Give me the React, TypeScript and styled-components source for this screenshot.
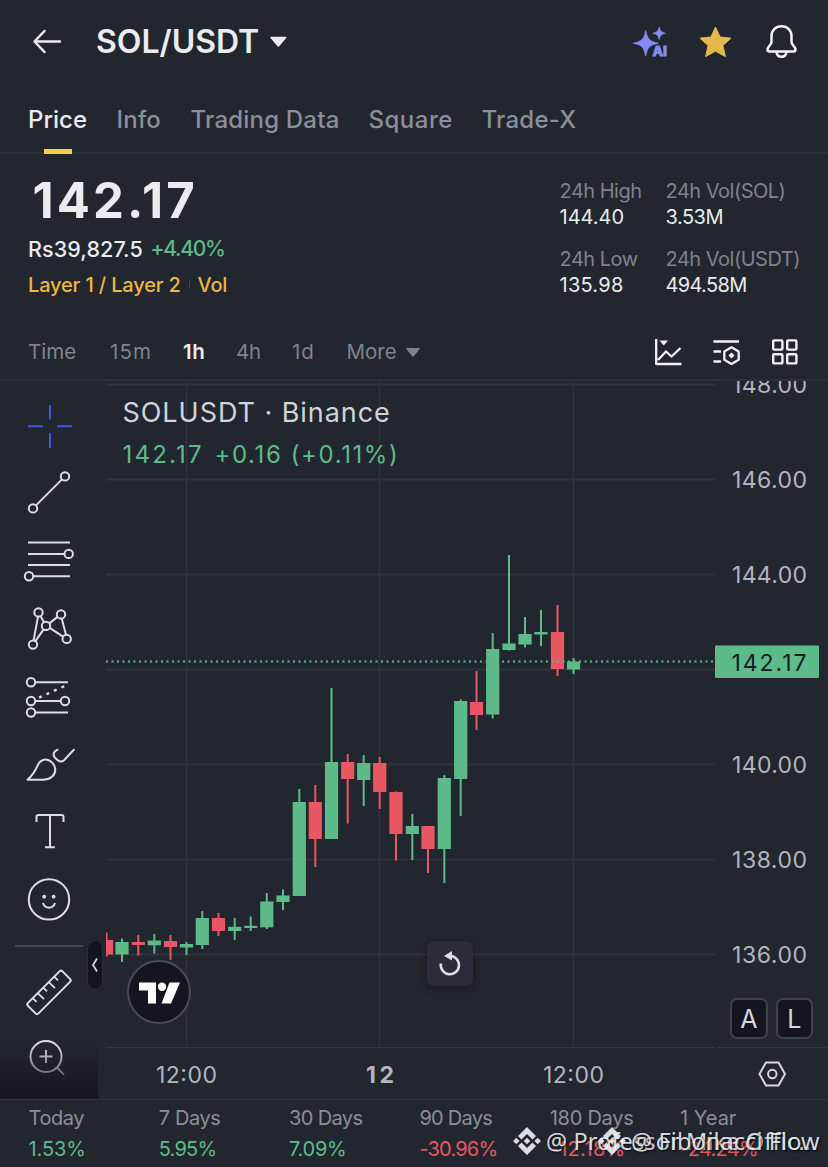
import React from "react";
import styled, { createGlobalStyle, css } from "styled-components";

const color = {
  bg: "#22262f",
  line: "#2d3039",
  text: "#eaecef",
  muted: "#8b8f99",
  dim: "#7f838e",
  green: "#5dbb8a",
  red: "#e85762",
  gold: "#ecb741",
  chartText: "#b2b5be",
  panel: "#131520",
};

const Global = createGlobalStyle`
  * { box-sizing: border-box; }
  body { margin: 0; background: ${color.bg}; }
`;

const Screen = styled.main`
  width: 828px;
  height: 1167px;
  position: relative;
  overflow: hidden;
  display: flex;
  flex-direction: column;
  background: ${color.bg};
  color: ${color.text};
  font-family: Inter, "Liberation Sans", sans-serif;
  white-space: nowrap;
  & > * {
    flex: none;
  }
`;

/* ---------- header ---------- */
const Header = styled.header`
  height: 84px;
  display: flex;
  align-items: center;
  padding: 0 30.5px 0 32px;
`;
const Pair = styled.h1`
  margin: 0 11.5px 0 34px;
  width: 162px;
  font-size: 32px;
  line-height: 40px;
  font-weight: 600;
  letter-spacing: 0;
`;
const HeaderActions = styled.div`
  margin-left: auto;
  display: flex;
  align-items: center;
  gap: 31.5px;
`;

const Tabs = styled.nav`
  height: 70px;
  display: flex;
  padding-left: 28px;
  border-bottom: 2px solid ${color.line};
`;
const Tab = styled.a<{ $w: number; $active?: boolean; $ls?: number }>`
  width: ${(p) => p.$w}px;
  font-size: 24px;
  line-height: 71px;
  font-weight: 500;
  letter-spacing: ${(p) => p.$ls ?? 0}px;
  color: ${(p) => (p.$active ? color.text : color.muted)};
  position: relative;
  ${(p) =>
    p.$active &&
    css`
      &::after {
        content: "";
        position: absolute;
        left: 16px;
        bottom: -2px;
        width: 28px;
        height: 5px;
        background: #f7cd4d;
      }
    `}
`;

/* ---------- price summary ---------- */
const Summary = styled.section`
  height: 172px;
  display: flex;
  justify-content: space-between;
  padding: 20px 27.5px 0 28px;
`;
const PriceBlock = styled.div`
  display: flex;
  flex-direction: column;
`;
const Price = styled.div`
  height: 54px;
  padding-left: 4.5px;
  font-size: 49px;
  line-height: 54px;
  font-weight: 700;
  letter-spacing: 3.1px;
`;
const Fiat = styled.div`
  height: 40px;
  display: flex;
  font-size: 21.5px;
  line-height: 42px;
  font-weight: 500;
`;
const FiatValue = styled.span`
  width: 122.5px;
  letter-spacing: 0.1px;
`;
const Change = styled.span`
  color: ${color.green};
  font-size: 21px;
  letter-spacing: -1.25px;
`;
const Tags = styled.div`
  display: flex;
  align-items: center;
  height: 34px;
  font-size: 20px;
  font-weight: 500;
  color: ${color.gold};
`;
const TagName = styled.span<{ $w?: number; $ls: number }>`
  width: ${(p) => (p.$w ? `${p.$w}px` : "auto")};
  letter-spacing: ${(p) => p.$ls}px;
`;
const TagRule = styled.i`
  width: 1px;
  height: 8px;
  margin-right: 8px;
  background: #434750;
`;
const Stats = styled.dl`
  margin: 4px 0 0;
  width: 241px;
  display: grid;
  grid-template-columns: 106px 1fr;
  grid-auto-rows: 68px;
`;
const Stat = styled.div`
  display: flex;
  flex-direction: column;
`;
const StatLabel = styled.dt`
  font-size: 20px;
  line-height: 26px;
  color: ${color.dim};
  letter-spacing: -0.5px;
`;
const StatValue = styled.dd<{ $ls?: number }>`
  margin: 0;
  font-size: 20px;
  line-height: 27px;
  letter-spacing: ${(p) => p.$ls ?? 0}px;
`;

/* ---------- intervals ---------- */
const Intervals = styled.div`
  height: 55px;
  display: flex;
  align-items: center;
  padding: 0 30px 1px 28px;
  border-bottom: 2px solid ${color.line};
`;
const Interval = styled.span<{ $w: number; $active?: boolean; $ls?: number }>`
  width: ${(p) => p.$w}px;
  font-size: 20.5px;
  line-height: 30px;
  letter-spacing: ${(p) => p.$ls ?? 0}px;
  font-weight: ${(p) => (p.$active ? 600 : 400)};
  color: ${(p) => (p.$active ? color.text : color.dim)};
`;
const IntervalTools = styled.div`
  margin-left: auto;
  display: flex;
  align-items: center;
  gap: 31px;
`;

/* ---------- chart ---------- */
const Workspace = styled.section`
  height: 719px;
  display: flex;
  position: relative;
  border-bottom: 1px solid #343741;
`;
const Toolbar = styled.aside`
  width: 98px;
  padding-top: 10.5px;
  display: flex;
  flex-direction: column;
  position: relative;
  overflow: hidden;
  &::after {
    content: "";
    position: absolute;
    left: 0;
    right: 0;
    bottom: 0;
    height: 56px;
    background: linear-gradient(rgba(20, 22, 32, 0), rgba(20, 22, 32, 0.45) 45%, #141620);
  }
`;
const ToolSlot = styled.svg`
  display: block;
  flex: none;
  width: 98px;
  height: 67.75px;
  overflow: visible;
  fill: none;
  stroke: #dcdee3;
  stroke-width: 2;
`;
const ToolRule = styled.hr`
  width: 68px;
  height: 2px;
  flex: none;
  margin: 11px 0 12px 15px;
  border: 0;
  background: #444751;
`;
const Pane = styled.div`
  width: 730px;
  position: relative;
`;
const Plot = styled.svg`
  display: block;
  font-family: Inter, "Liberation Sans", sans-serif;
`;
const Legend = styled.div`
  position: absolute;
  left: 24.5px;
  top: 14px;
`;
const LegendTitle = styled.div`
  font-size: 27px;
  line-height: 36px;
  color: #d1d4dc;
  letter-spacing: 0.95px;
`;
const LegendValues = styled.div`
  display: flex;
  font-size: 24px;
  line-height: 36px;
  margin-top: 6px;
  color: ${color.green};
  span:first-child {
    width: 92px;
    letter-spacing: 2.2px;
  }
  span:last-child {
    letter-spacing: 1.6px;
  }
`;
const Collapse = styled.button`
  position: absolute;
  left: 87px;
  top: 559px;
  width: 16px;
  height: 50px;
  padding: 0;
  border: 1px solid #2d303b;
  border-radius: 8px;
  background: ${color.panel};
  display: grid;
  place-items: center;
`;
const Brand = styled.div`
  position: absolute;
  left: 29px;
  top: 579px;
  width: 64px;
  height: 64px;
  border-radius: 50%;
  border: 2px solid #494c57;
  background: ${color.panel};
`;
const Reset = styled.button`
  position: absolute;
  left: 329px;
  top: 560px;
  width: 46px;
  height: 45px;
  padding: 0;
  border: 0;
  border-radius: 7px;
  background: #2a2d39;
  box-shadow: 0 2px 6px rgba(10, 12, 20, 0.5);
`;
const ScaleButtons = styled.div`
  position: absolute;
  left: 632px;
  top: 617px;
  display: flex;
  gap: 8px;
`;
const ScaleButton = styled.button`
  width: 37.5px;
  height: 41px;
  padding: 0;
  border: 2px solid #3e414c;
  border-radius: 7px;
  background: ${color.panel};
  color: #d5d7dd;
  font: 400 25px/38px Inter, "Liberation Sans", sans-serif;
`;

/* ---------- performance ---------- */
const Performance = styled.footer`
  height: 67px;
  padding: 4px 0 0 28.5px;
  display: grid;
  grid-template-columns: repeat(6, 130.3px);
  position: relative;
`;
const Period = styled.div`
  display: flex;
  flex-direction: column;
  font-size: 20px;
`;
const PeriodName = styled.span<{ $ls: number }>`
  line-height: 28px;
  color: ${color.muted};
  letter-spacing: ${(p) => p.$ls}px;
`;
const PeriodValue = styled.span<{ $down?: boolean; $ls: number }>`
  line-height: 34px;
  color: ${(p) => (p.$down ? color.red : color.green)};
  letter-spacing: ${(p) => p.$ls}px;
`;
const Credit = styled.div<{ $left: number }>`
  position: absolute;
  left: ${(p) => p.$left}px;
  top: 25px;
  display: flex;
  align-items: center;
  gap: 5px;
  font: 400 23.5px/32px "Noto Sans", sans-serif;
  letter-spacing: 0.1px;
  color: rgba(240, 241, 244, 0.9);
  text-shadow: 1px 1px 2px rgba(0, 0, 0, 0.7);
`;

type Candle = [number, number, number, number, number, 0 | 1];
/* x centre, body top, body bottom, wick top, wick bottom, rising */
const candles: Candle[] = [
  [106.5, 940, 954.5, 932.5, 956.5, 0],
  [122, 942, 954.5, 938.5, 962, 1],
  [138.3, 942, 945, 935, 955.5, 0],
  [154.3, 940.5, 945.3, 934, 953.5, 1],
  [170.5, 941, 947, 935, 960, 0],
  [186.5, 944, 947.5, 942, 955, 1],
  [202.3, 918, 945, 911, 949, 1],
  [218.5, 918, 931, 913, 936, 0],
  [234.7, 926.8, 931, 918, 940, 1],
  [250.7, 925.8, 928, 916.5, 931, 1],
  [266.8, 901.5, 927.3, 893, 929, 1],
  [283, 895.5, 902, 889.5, 910, 1],
  [299.3, 802, 896, 789, 896, 1],
  [315.3, 802, 839, 785, 867, 0],
  [331.5, 762, 839, 688, 839, 1],
  [347.7, 762, 779, 754, 823.5, 0],
  [363.7, 763, 780, 755, 806, 1],
  [379.7, 763, 792, 757, 809, 0],
  [396, 792, 834, 791.5, 860.5, 0],
  [412.3, 826, 834, 814, 860, 1],
  [428, 826, 849, 826, 873, 0],
  [444.3, 778, 849, 775, 883, 1],
  [460.7, 701, 779, 699.5, 816, 1],
  [476.5, 702, 715, 671, 730, 0],
  [492.7, 649, 714.5, 633, 718.5, 1],
  [509, 643.5, 650, 555, 650.5, 1],
  [525, 634, 644.5, 617, 647.5, 1],
  [541, 632, 634.5, 610, 646, 1],
  [557.5, 632, 669, 605, 676, 0],
  [573.5, 661.5, 669.5, 658, 674, 1],
];
const priceLines = [
  [384, "148.00"],
  [479, "146.00"],
  [574, "144.00"],
  [669, "142.00"],
  [764, "140.00"],
  [859, "138.00"],
  [954, "136.00"],
] as const;

function Chart() {
  return (
    <Plot width="730" height="718" viewBox="98 381 730 718">
      <defs>
        <clipPath id="plot-area">
          <rect x="106" y="381" width="609" height="666" />
        </clipPath>
      </defs>
      <g stroke="#30333d" strokeWidth="2">
        {priceLines.map(([y]) => (
          <path key={y} d={`M106 ${y}.4H715`} />
        ))}
        {[186.5, 379.5, 573.5].map((x) => (
          <path key={x} d={`M${x} 381V1046`} strokeWidth="1.5" />
        ))}
        <path d="M106 1047.5H714M717 1047.5H828" strokeWidth="1" stroke="#343741" />
      </g>
      <g clipPath="url(#plot-area)">
        {candles.map(([x, t, b, wt, wb, up]) => (
          <g key={x} fill={up ? color.green : color.red}>
            <rect x={x - 1} y={wt} width="2" height={wb - wt} />
            <rect x={x - 6.6} y={t} width="13.2" height={b - t} />
          </g>
        ))}
        <path d="M106 661.5H715" stroke={color.green} strokeWidth="1.9" strokeDasharray="2 3.5" />
      </g>
      <g fill={color.chartText} fontSize="23">
        {priceLines.map(([y, t]) => (
          <text key={t} x="732" y={y + 9.2} textLength="75">
            {t}
          </text>
        ))}
        <text x="156" y="1083" textLength="61">12:00</text>
        <text x="366" y="1083" textLength="28" fontWeight="700">12</text>
        <text x="543" y="1083" textLength="61">12:00</text>
      </g>
      <rect x="715" y="645.5" width="104" height="32.5" rx="1" fill={color.green} />
      <text x="731.5" y="670.5" textLength="75" fontSize="23" fill="#171b24">142.17</text>
      <g fill="none" stroke="#d5d7dd" strokeWidth="2">
        <path d="M759.5 1074 766 1062.5H778.5L785 1074 778.5 1085.5H766Z" />
        <circle cx="772.3" cy="1074" r="4.2" />
      </g>
    </Plot>
  );
}

const Tool = ({ cy, children }: { cy: number; children: React.ReactNode }) => (
  <ToolSlot viewBox={`0 ${cy - 33.9} 98 67.75`}>{children}</ToolSlot>
);

function DrawingTools() {
  return (
    <Toolbar>
      <Tool cy={426}>
        <path stroke="#3d58e0" d="M50 405V419.5M50 433V448M28 426.4H43M57 426.4H72" />
      </Tool>
      <Tool cy={493.5}>
        <circle cx="33" cy="509" r="4.2" />
        <circle cx="65" cy="477" r="4.2" />
        <path d="M36 506 62 480" />
      </Tool>
      <Tool cy={561.3}>
        <path d="M28 543H70M28 554.3H64.5M28 565.5H70M33 576.7H70" />
        <circle cx="68.7" cy="554.3" r="4.2" />
        <circle cx="29" cy="576.7" r="4.2" />
      </Tool>
      <Tool cy={629}>
        <circle cx="38.5" cy="612.5" r="4.2" />
        <circle cx="61" cy="614.5" r="4.2" />
        <circle cx="46" cy="626" r="4.2" />
        <circle cx="33" cy="644.7" r="4.2" />
        <circle cx="66.7" cy="639" r="4.2" />
        <path d="M38 616.7 33.6 640.5M40.5 616.2 44 622.3M43.6 629.5 35.4 641.2M49.4 623.5 57.5 617M49.7 628 63 636.7M61.7 618.7 66 634.8" />
      </Tool>
      <Tool cy={696.9}>
        <circle cx="31" cy="682.3" r="4.2" />
        <circle cx="31" cy="701" r="4.2" />
        <circle cx="65" cy="701" r="4.2" />
        <circle cx="31" cy="712.5" r="4.2" />
        <path d="M35 682.3H68M35 701H61M35 712.5H68" />
        <path d="M39 697.6 67 685" strokeDasharray="3 5.2" strokeWidth="2.4" />
      </Tool>
      <Tool cy={764.7}>
        <path
          strokeLinejoin="round"
          d="M27.5 780.5C34 775 36 770 38 765.5C41 760 46 759 50.5 762C56 766 57 773 52 777.5C49 780 46 780.5 43 780.5Z"
        />
        <path strokeLinecap="round" d="M57.5 750.5C53 752.5 52.5 756.5 55.5 759L58 761.2C60 762.8 62 762.8 64 761L73.8 750.5" />
      </Tool>
      <Tool cy={832.4}>
        <path strokeLinejoin="round" d="M36.5 822.5V817.5Q36.5 815.6 38.5 815.6H61.5Q63.5 815.6 63.5 817.5V822.5M50 815.6V847.8M45 847.8H54.8" />
      </Tool>
      <Tool cy={900.2}>
        <circle cx="49" cy="899.7" r="20.2" />
        <g fill="#dcdee3" stroke="none">
          <circle cx="44.2" cy="897" r="1.9" />
          <circle cx="53.6" cy="897" r="1.9" />
        </g>
        <path d="M43 903.3C45 909.5 53 909.5 55 903.3" />
      </Tool>
      <ToolRule />
      <Tool cy={992.5}>
        <path
          strokeLinejoin="round"
          d="M28 1002.5 59.5 971Q61 969.5 62.5 971L70 978.5Q71.5 980 70 981.5L38.5 1013Q37 1014.5 35.5 1013L28 1005.5Q26.5 1004 28 1002.5Z"
        />
        <path strokeWidth="1.8" d="M33 998 36.5 1001.5M38 993 44 998.8M43.5 987.5 47 991M49 982 55 987.8M54.5 976.5 58 980" />
      </Tool>
      <Tool cy={1060.3}>
        <circle cx="46" cy="1057" r="15.5" />
        <path d="M46 1050.5V1063.5M39.5 1057H52.5M57 1068 64 1075" />
      </Tool>
    </Toolbar>
  );
}

const Mark = () => (
  <svg width="28" height="28" viewBox="0 0 28 28" fill="rgba(235,236,240,.92)">
    <path d="M14 0 23 9 19.5 12.5 14 7 8.5 12.5 5 9ZM14 28 23 19 19.5 15.5 14 21 8.5 15.5 5 19ZM14 10.7 17.3 14 14 17.3 10.7 14ZM3.3 10.7 6.6 14 3.3 17.3 0 14ZM24.7 10.7 28 14 24.7 17.3 21.4 14Z" />
  </svg>
);

export default function App() {
  return (
    <Screen>
      <Global />
      <Header>
        <svg width="30" height="26" viewBox="0 0 30 26" fill="none" stroke={color.text} strokeWidth="2.5" strokeLinecap="round" strokeLinejoin="round">
          <path d="M12.5 2 2.5 12.5 12.5 23M3 12.5H28" />
        </svg>
        <Pair>SOL/USDT</Pair>
        <svg width="17" height="12" viewBox="0 0 17 12" fill={color.text}>
          <path d="M1.2 .8H15.5Q17 .8 16 2.2L9.5 10Q8.4 11.4 7.3 10L.7 2.2Q-.3 .8 1.2 .8Z" />
        </svg>
        <HeaderActions>
          <svg width="34" height="34" viewBox="0 0 34 34" fill="#858bf3" overflow="visible">
            <path d="M12.7 5.500C14.6 14.3 16.4 16.3 25.3 18.2C16.4 20.1 14.6 22.1 12.7 31C10.8 22.1 9 20.1 .3 18.2C9 16.3 10.8 14.3 12.7 5.500Z" stroke="#858bf3" strokeWidth=".8" strokeLinejoin="round" />
            <path d="M26.2 1.8C27.2 6 28.4 7.2 32.6 8.2C28.4 9.2 27.2 10.4 26.2 14.6C25.2 10.4 24 9.2 19.8 8.2C24 7.2 25.2 6 26.2 1.8Z" stroke="#858bf3" strokeWidth=".6" strokeLinejoin="round" />
            <path d="M22.5 19.800H34V32H17.5Z" fill={color.bg} />
            <text x="19.5" y="30.5" fontSize="12.5" fontWeight="800" textLength="14.5" lengthAdjust="spacingAndGlyphs" stroke="#858bf3" strokeWidth=".8">AI</text>
          </svg>
          <svg width="34" height="34" viewBox="0 0 34 34" fill="#e3b94c">
            <path d="M17.5 2 22.1 12 33 13.2 24.9 20.6 27.4 31.6 17.5 26.2 7.6 31.6 10.1 20.6 2 13.2 12.9 12Z" stroke="#e3b94c" strokeLinejoin="round" />
          </svg>
          <svg width="34" height="34" viewBox="0 0 34 34" fill="none" stroke="#f4f5f7" strokeWidth="2.5" strokeLinejoin="round">
            <path d="M17.5 1.3C11.5 1.3 7.5 5.5 7.5 11V17C7.5 19.5 3.5 22 3.5 24.5C3.5 25.8 4.3 26.5 5.5 26.5H29.5C30.7 26.5 31.5 25.8 31.5 24.5C31.5 22 27.5 19.5 27.5 17V11C27.5 5.5 23.5 1.3 17.5 1.3Z" />
            <path d="M12.5 27.3C13 30.3 15 31.8 17.5 31.8S22 30.3 22.5 27.3" />
          </svg>
        </HeaderActions>
      </Header>

      <Tabs>
        <Tab $w={88.5} $active>Price</Tab>
        <Tab $w={74} $ls={0.1}>Info</Tab>
        <Tab $w={178} $ls={0.2}>Trading Data</Tab>
        <Tab $w={113} $ls={0.5}>Square</Tab>
        <Tab $w={100} $ls={0.25}>Trade-X</Tab>
      </Tabs>

      <Summary>
        <PriceBlock>
          <Price>142.17</Price>
          <Fiat>
            <FiatValue>Rs39,827.5</FiatValue>
            <Change>+4.40%</Change>
          </Fiat>
          <Tags>
            <TagName $w={160.5} $ls={-0.15}>Layer 1 / Layer 2</TagName>
            <TagRule />
            <TagName $ls={-0.2}>Vol</TagName>
          </Tags>
        </PriceBlock>
        <Stats>
          <Stat>
            <StatLabel>24h High</StatLabel>
            <StatValue>144.40</StatValue>
          </Stat>
          <Stat>
            <StatLabel>24h Vol(SOL)</StatLabel>
            <StatValue $ls={-0.5}>3.53M</StatValue>
          </Stat>
          <Stat>
            <StatLabel>24h Low</StatLabel>
            <StatValue $ls={0.25}>135.98</StatValue>
          </Stat>
          <Stat>
            <StatLabel>24h Vol(USDT)</StatLabel>
            <StatValue $ls={-0.65}>494.58M</StatValue>
          </Stat>
        </Stats>
      </Summary>

      <Intervals>
        <Interval $w={82}>Time</Interval>
        <Interval $w={73} $ls={1.1}>15m</Interval>
        <Interval $w={53} $ls={0.5} $active>1h</Interval>
        <Interval $w={56} $ls={-0.3}>4h</Interval>
        <Interval $w={54.5} $ls={0.8}>1d</Interval>
        <Interval $w={59.5}>More</Interval>
        <svg width="14" height="9" viewBox="0 0 14 9" fill={color.dim}>
          <path d="M1 0H13Q14.5 0 13.5 1.3L8 8Q7 9.3 6 8L.5 1.3Q-.5 0 1 0Z" />
        </svg>
        <IntervalTools>
          <svg width="28" height="28" viewBox="0 0 28 28" fill="none" stroke="#f0f1f4" strokeWidth="2.3">
            <path d="M2.2 1V26H27.5M4 22 12 13.5 17.5 18.5 26.5 10" strokeLinejoin="round" />
            <path d="M5.5 2.5H14L9.8 7.5Z" fill="#f0f1f4" stroke="none" />
          </svg>
          <svg width="28" height="28" viewBox="0 0 28 28" fill="none" stroke="#f0f1f4" strokeWidth="2.3">
            <path d="M.5 3.5H26M.5 13.5H8M.5 23.5H8" />
            <path d="M18.5 9.3 25.7 13.4V21.8L18.5 25.9 11.3 21.8V13.4Z" strokeLinejoin="round" />
            <path d="M18.5 14.6 21.5 17.6 18.5 20.6 15.5 17.6Z" fill="#f0f1f4" stroke="none" />
          </svg>
          <svg width="26" height="26" viewBox="0 0 26 26" fill="none" stroke="#f0f1f4" strokeWidth="2.4">
            <rect x="1.2" y="1.4" width="9.2" height="9.2" rx="1" />
            <rect x="15.2" y="1.4" width="9.2" height="9.2" rx="1" />
            <rect x="1.2" y="15.2" width="9.2" height="9.2" rx="1" />
            <rect x="15.2" y="15.2" width="9.2" height="9.2" rx="1" />
          </svg>
        </IntervalTools>
      </Intervals>

      <Workspace>
        <DrawingTools />
        <Pane>
          <Chart />
          <Legend>
            <LegendTitle>SOLUSDT · Binance</LegendTitle>
            <LegendValues>
              <span>142.17</span>
              <span>+0.16 (+0.11%)</span>
            </LegendValues>
          </Legend>
          <Brand>
            <svg width="60" height="60" viewBox="129 962 60 60" fill="#fff">
              <path d="M139 982.5H156V1003.5H148V990.5H139ZM169.5 982.5H180L171 1003.5H161.5Z" />
              <circle cx="162" cy="986.7" r="4.2" />
            </svg>
          </Brand>
          <Reset>
            <svg width="46" height="45" viewBox="427 942 46 45" fill="none" stroke="#dcdee3" strokeWidth="2.6">
              <path d="M440.9 964.5A9.1 9.1 0 1 0 450.5 957" />
              <path d="M444 957 452 952V961.5Z" fill="#dcdee3" stroke="none" />
            </svg>
          </Reset>
          <ScaleButtons>
            <ScaleButton>A</ScaleButton>
            <ScaleButton>L</ScaleButton>
          </ScaleButtons>
        </Pane>
        <Collapse>
          <svg width="8" height="16" viewBox="0 0 8 16" fill="none" stroke="#d1d4dc" strokeWidth="1.8">
            <path d="M6 1.5 2 8 6 14.5" />
          </svg>
        </Collapse>
      </Workspace>

      <Performance>
        <Period>
          <PeriodName $ls={-0.45}>Today</PeriodName>
          <PeriodValue $ls={-0.1}>1.53%</PeriodValue>
        </Period>
        <Period>
          <PeriodName $ls={-0.4}>7 Days</PeriodName>
          <PeriodValue $ls={-0.8}>5.95%</PeriodValue>
        </Period>
        <Period>
          <PeriodName $ls={-0.65}>30 Days</PeriodName>
          <PeriodValue $ls={-0.3}>7.09%</PeriodValue>
        </Period>
        <Period>
          <PeriodName $ls={-0.75}>90 Days</PeriodName>
          <PeriodValue $ls={-0.8} $down>-30.96%</PeriodValue>
        </Period>
        <Period>
          <PeriodName $ls={-0.25}>180 Days</PeriodName>
          <PeriodValue $ls={0.3} $down>-12.18%</PeriodValue>
        </Period>
        <Period>
          <PeriodName $ls={0}>1 Year</PeriodName>
          <PeriodValue $ls={-0.7} $down>-24.24%</PeriodValue>
        </Period>
        <Credit $left={513}>
          <Mark />
          <span>@ Professor Mike Offic...</span>
        </Credit>
        <Credit $left={598}>
          <Mark />
          <span>@ Fibonacci Flow</span>
        </Credit>
      </Performance>
    </Screen>
  );
}
